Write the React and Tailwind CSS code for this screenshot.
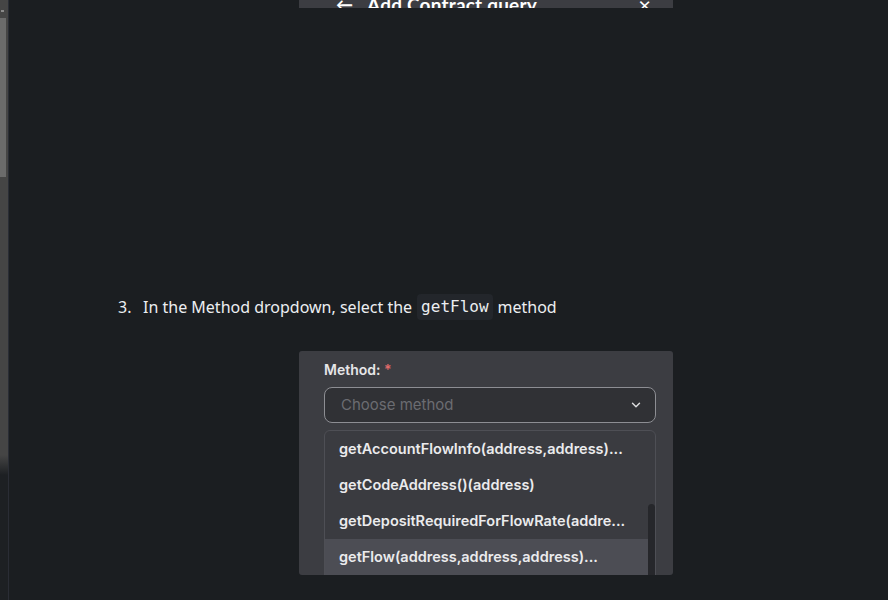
import React from 'react';
import { ChevronDown } from 'lucide-react';

const methods = [
  'getAccountFlowInfo(address,address)...',
  'getCodeAddress()(address)',
  'getDepositRequiredForFlowRate(addre...',
  'getFlow(address,address,address)...',
];

function Scrollbar() {
  return (
    <div className="w-[8px] shrink-0 flex flex-col bg-[linear-gradient(to_bottom,#454545_0,#454545_455px,#1d2023_475px)]">
      <div className="h-[18px] flex items-start pt-[10px] pl-[1px]">
        <div className="w-[3px] h-[2px] bg-[#8a8a8a]" />
      </div>
      <div className="w-[6px] h-[159px] bg-[#6b6b6b]" />
    </div>
  );
}

function TopShot() {
  return (
    <div className="ml-[290px] w-[374px] h-[8px] bg-[#3c3d42] overflow-hidden">
      <div className="flex items-center -mt-[6px] pl-[37px] pr-[22px] text-white font-['Lato',sans-serif] font-bold text-[19px] leading-[22px]">
        <span className="text-[17px] mr-[14px]">←</span>
        <span className="tracking-[0.2px]">Add Contract query...</span>
        <span className="ml-auto text-[22px] font-normal">×</span>
      </div>
    </div>
  );
}

function MethodShot() {
  return (
    <div className="ml-[290px] w-[374px] h-[224px] bg-[#3c3d42] rounded-[3px] overflow-hidden pl-[25px] pr-[17px] font-['Inter',sans-serif]">
      <div className="pt-[8px] h-[36px] text-[14px] font-semibold text-[#e6e6e8]">
        Method: <span className="text-[#e06a6a]">*</span>
      </div>
      <div className="h-[36px] flex items-center justify-between rounded-[8px] border-[1.5px] border-[#8d8e93] bg-[#303135] pl-[16px] pr-[12px]">
        <span className="text-[15px] text-[#6b6c71]">Choose method</span>
        <ChevronDown size={14} strokeWidth={2.5} className="text-[#d8d8da]" />
      </div>
      <div className="mt-[7px] h-[152px] flex rounded-t-[6px] border border-[#4e4f55] bg-[#3a3b40] overflow-hidden">
        <div className="flex-1">
          {methods.map((m, i) => (
            <div
              key={m}
              className={`h-[36px] flex items-center pl-[14px] text-[14.5px] font-semibold text-[#ebebed] ${i === 3 ? 'bg-[#4c4d54]' : ''}`}
            >
              {m}
            </div>
          ))}
        </div>
        <div className="w-[7px] pt-[73px]">
          <div className="h-full rounded-t-[4px] bg-[#26272b]" />
        </div>
      </div>
    </div>
  );
}

export default function App() {
  return (
    <div className="flex h-[600px] w-full overflow-hidden bg-[#1b1e21]">
      <Scrollbar />
      <div className="flex-1 border-l border-[#2a2d35] flex flex-col">
        <TopShot />
        <div className="h-[286px]" />
        <div className="flex items-center pl-[109px] h-[26px] text-[16px] text-[#eceef1] font-['Noto_Sans',sans-serif]">
          <span className="w-[25px]">3.</span>
          <span>In the Method dropdown, select the</span>
          <code className="mx-[5px] px-[4px] py-[1px] rounded-[4px] bg-[#23262b] text-[16px] font-['DejaVu_Sans_Mono',monospace] text-[#eceef1]">getFlow</code>
          <span>method</span>
        </div>
        <div className="h-[31px]" />
        <MethodShot />
      </div>
    </div>
  );
}
